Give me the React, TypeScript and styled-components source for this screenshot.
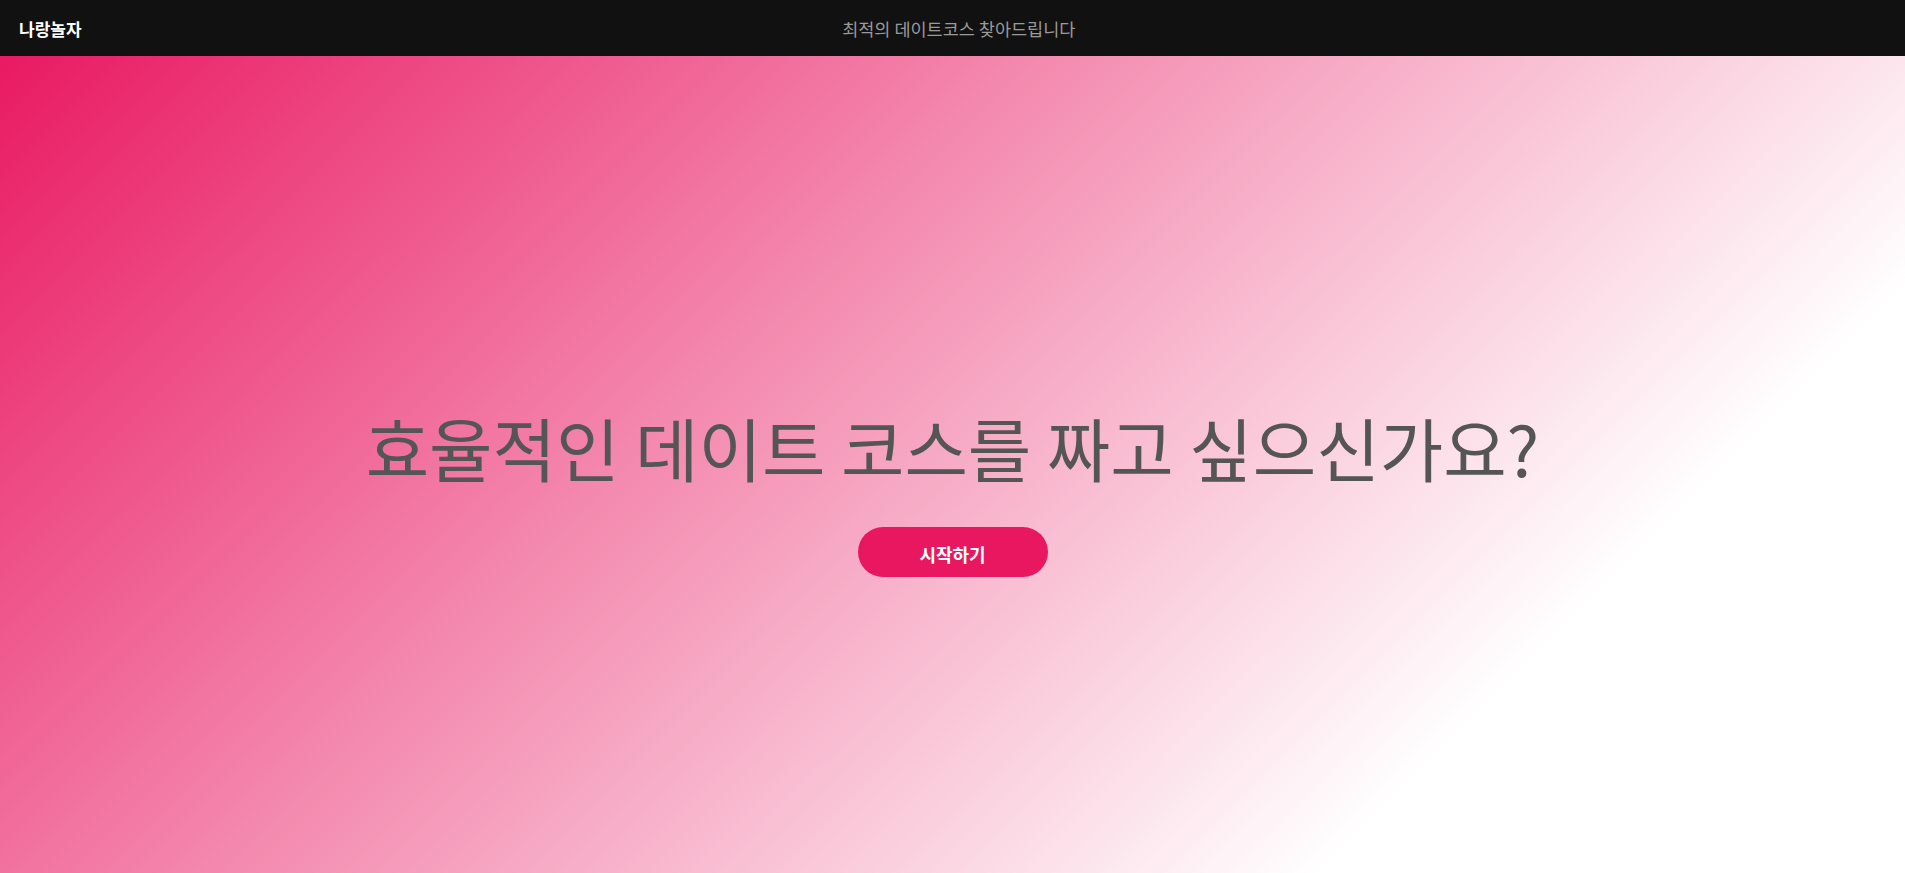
import styled, { createGlobalStyle } from "styled-components";

const GlobalStyle = createGlobalStyle`
    * {
        box-sizing: border-box;
    }
    body {
        margin: 0;
        font-family: "Noto Sans CJK KR", "Noto Sans", sans-serif;
        background-color: #ffffff;
    }
`;

const Header = styled.header`
    display: flex;
    justify-content: space-between;
    align-items: center;
    height: 56px;
    padding: 0 19px;
    background-color: #111111;
`;

const Logo = styled.div`
    color: #ffffff;
    font-size: 17px;
    font-weight: 700;
`;

const Tagline = styled.div`
    color: #9a9a9a;
    font-size: 17.5px;
`;

const HeaderSpacer = styled.div`
    width: 50px;
`;

const Hero = styled.section`
    display: flex;
    flex-direction: column;
    align-items: center;
    justify-content: center;
    height: 100vh;
    background: linear-gradient(135deg, #e91a62 0%, #ffffff 77%);
`;

const Title = styled.h1`
    margin: 0;
    color: #555555;
    font-size: 69px;
    font-weight: 400;
    line-height: 1.15;
`;

const StartButton = styled.button`
    margin-top: 40px;
    width: 190px;
    height: 50px;
    border: none;
    border-radius: 25px;
    background-color: #e8175f;
    color: #ffffff;
    font-family: inherit;
    font-size: 18px;
    font-weight: 700;
    padding-top: 4px;
    cursor: pointer;
`;

const Below = styled.section`
    height: 1000px;
`;

function App() {
    return (
        <>
            <GlobalStyle />
            <Header>
                <Logo>나랑놀자</Logo>
                <Tagline>최적의 데이트코스 찾아드립니다</Tagline>
                <HeaderSpacer />
            </Header>
            <Hero>
                <Title>효율적인 데이트 코스를 짜고 싶으신가요?</Title>
                <StartButton>시작하기</StartButton>
            </Hero>
            <Below />
        </>
    );
}

export default App;
